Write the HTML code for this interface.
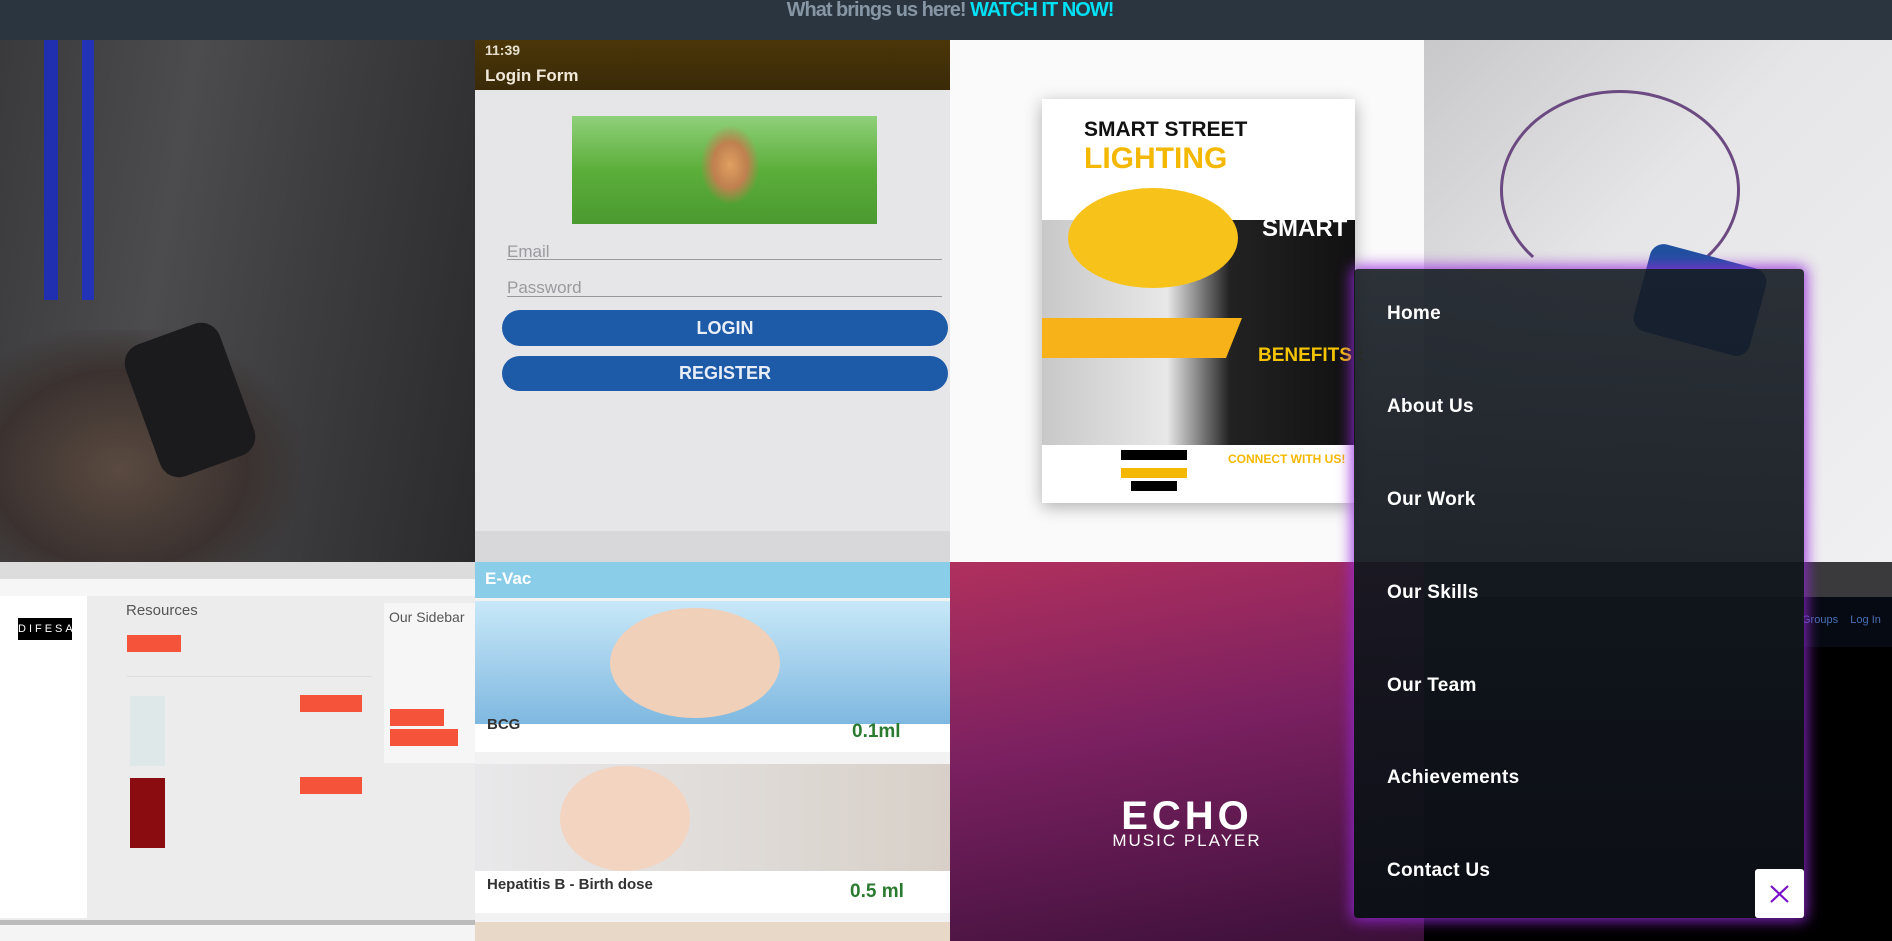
<!DOCTYPE html>
<html><head><meta charset="utf-8">
<style>
*{margin:0;padding:0;box-sizing:border-box}
body{width:1892px;height:941px;overflow:hidden;background:#2b343e;font-family:"Liberation Sans",sans-serif;position:relative}
.a{position:absolute}
.hdr{left:0;top:0;width:1892px;height:40px;background:#2b353f;text-align:center;font-weight:bold;font-size:20px;color:#8696a4;line-height:20px;letter-spacing:-1px;padding-left:8px}
.hdr b{color:#00e1f5}
.nav a{position:absolute;left:1387px;color:#fff;font-weight:bold;font-size:19px;text-decoration:none;letter-spacing:0.3px}
</style></head><body>
<div class="a hdr">What brings us here! <b>WATCH IT NOW!</b></div>

<!-- tile1 -->
<div class="a" style="left:0;top:40px;width:475px;height:522px;background:linear-gradient(100deg,#3a3a3c 0%,#4c4c4e 35%,#3e3e40 60%,#2a2a2c 100%)"></div>
<div class="a" style="left:44px;top:40px;width:14px;height:260px;background:#1f2fb0"></div>
<div class="a" style="left:82px;top:40px;width:12px;height:260px;background:#2233b8"></div>
<div class="a" style="left:0;top:330px;width:300px;height:232px;background:radial-gradient(ellipse at 40% 60%,#5a4a40 0%,#3b3230 50%,rgba(40,40,42,0) 75%)"></div>
<div class="a" style="left:140px;top:330px;width:100px;height:140px;border-radius:20px;background:#1b1b1d;transform:rotate(-20deg)"></div>

<!-- tile2 -->
<div class="a" style="left:475px;top:40px;width:475px;height:522px;background:#e6e6e8"></div>
<div class="a" style="left:475px;top:40px;width:475px;height:50px;background:linear-gradient(#4a3608,#3a2a08)"></div>
<div class="a" style="left:485px;top:42px;color:#e8e0d0;font-size:14px;font-weight:bold">11:39</div>
<div class="a" style="left:485px;top:66px;color:#f0e8d8;font-size:17px;font-weight:bold">Login Form</div>
<div class="a" style="left:572px;top:116px;width:305px;height:108px;background:linear-gradient(#8fd07a,#5cae3a 50%,#4a9a30)"></div>
<div class="a" style="left:700px;top:125px;width:60px;height:80px;background:radial-gradient(ellipse,#e0a060,#c08050 40%,rgba(0,0,0,0) 70%)"></div>
<div class="a" style="left:507px;top:242px;color:#9a9aa0;font-size:17px">Email</div>
<div class="a" style="left:507px;top:259px;width:435px;height:1px;background:#999"></div>
<div class="a" style="left:507px;top:278px;color:#9a9aa0;font-size:17px">Password</div>
<div class="a" style="left:507px;top:296px;width:435px;height:1px;background:#999"></div>
<div class="a" style="left:502px;top:310px;width:446px;height:36px;border-radius:18px;background:#1d5aa8;color:#e8eef8;text-align:center;line-height:36px;font-weight:bold;font-size:18px">LOGIN</div>
<div class="a" style="left:502px;top:356px;width:446px;height:35px;border-radius:18px;background:#1d5aa8;color:#e8eef8;text-align:center;line-height:35px;font-weight:bold;font-size:18px">REGISTER</div>
<div class="a" style="left:475px;top:531px;width:475px;height:31px;background:#d8d8da"></div>

<!-- tile3 -->
<div class="a" style="left:950px;top:40px;width:474px;height:522px;background:#fafafa"></div>
<div class="a" style="left:1042px;top:99px;width:313px;height:404px;background:#fff;box-shadow:0 4px 16px rgba(0,0,0,.3)"></div>
<div class="a" style="left:1084px;top:118px;color:#111;font-size:21px;font-weight:bold">SMART STREET</div>
<div class="a" style="left:1084px;top:142px;color:#f5b800;font-size:30px;font-weight:bold">LIGHTING</div>
<div class="a" style="left:1042px;top:220px;width:313px;height:225px;background:linear-gradient(90deg,#c8c8c8 0%,#e8e8e8 40%,#222 60%,#111 100%)"></div>
<div class="a" style="left:1068px;top:188px;width:170px;height:100px;border-radius:50%;background:#f7c21a"></div>
<div class="a" style="left:1042px;top:318px;width:200px;height:40px;background:#f7b21a;clip-path:polygon(0 0,100% 0,92% 100%,0 100%)"></div>
<div class="a" style="left:1262px;top:215px;color:#fff;font-size:24px;font-weight:bold">SMART</div>
<div class="a" style="left:1258px;top:345px;color:#f5c400;font-size:19px;font-weight:bold">BENEFITS :</div>
<div class="a" style="left:1042px;top:445px;width:313px;height:58px;background:#fff"></div>
<div class="a" style="left:1121px;top:450px;width:66px;height:10px;background:#000"></div>
<div class="a" style="left:1121px;top:468px;width:66px;height:10px;background:#f5b800"></div>
<div class="a" style="left:1131px;top:481px;width:46px;height:10px;background:#000"></div>
<div class="a" style="left:1228px;top:452px;color:#f5b800;font-size:12px;font-weight:bold">CONNECT WITH US!</div>

<!-- tile4 -->
<div class="a" style="left:1424px;top:40px;width:468px;height:522px;background:linear-gradient(135deg,#c8c8ca,#e6e6e8 40%,#f0f0f2)"></div>
<div class="a" style="left:1500px;top:90px;width:240px;height:200px;border:3px solid #6a4a80;border-radius:50%;border-bottom-color:transparent"></div>
<div class="a" style="left:1640px;top:255px;width:120px;height:90px;background:#2050a0;border-radius:14px;transform:rotate(15deg)"></div>

<!-- tile5 -->
<div class="a" style="left:0;top:562px;width:475px;height:379px;background:#ececec"></div>
<div class="a" style="left:0;top:562px;width:475px;height:17px;background:#dcdcdc"></div>
<div class="a" style="left:0;top:579px;width:475px;height:17px;background:#f6f6f6"></div>
<div class="a" style="left:0;top:596px;width:87px;height:322px;background:#fff"></div>
<div class="a" style="left:18px;top:618px;width:54px;height:22px;background:#000;color:#fff;font-size:11px;text-align:center;line-height:22px;letter-spacing:3px">DIFESA</div>
<div class="a" style="left:126px;top:602px;color:#555;font-size:15px">Resources</div>
<div class="a" style="left:127px;top:635px;width:54px;height:17px;background:#f5533a"></div>
<div class="a" style="left:127px;top:676px;width:245px;height:1px;background:#ddd"></div>
<div class="a" style="left:130px;top:696px;width:35px;height:70px;background:#dfe8e8"></div>
<div class="a" style="left:130px;top:778px;width:35px;height:70px;background:#8a0c10"></div>
<div class="a" style="left:300px;top:695px;width:62px;height:17px;background:#f5533a"></div>
<div class="a" style="left:300px;top:777px;width:62px;height:17px;background:#f5533a"></div>
<div class="a" style="left:384px;top:603px;width:91px;height:160px;background:#f6f6f6"></div>
<div class="a" style="left:389px;top:609px;color:#555;font-size:14px">Our Sidebar</div>
<div class="a" style="left:390px;top:709px;width:54px;height:17px;background:#f5533a"></div>
<div class="a" style="left:390px;top:729px;width:68px;height:17px;background:#f5533a"></div>
<div class="a" style="left:0;top:920px;width:475px;height:21px;background:#f4f4f4;border-top:5px solid #bbb"></div>

<!-- tile6 -->
<div class="a" style="left:475px;top:562px;width:475px;height:379px;background:#f2f2f2"></div>
<div class="a" style="left:475px;top:562px;width:475px;height:36px;background:#8acde8;color:#fff;font-size:17px;font-weight:bold;padding:7px 10px">E-Vac</div>
<div class="a" style="left:475px;top:601px;width:475px;height:123px;background:linear-gradient(#c8e8f8,#7fb8e0)"></div>
<div class="a" style="left:610px;top:608px;width:170px;height:110px;border-radius:50%;background:#f0d0b8"></div>
<div class="a" style="left:475px;top:724px;width:475px;height:28px;background:#fff"></div>
<div class="a" style="left:487px;top:716px;color:#333;font-size:15px;font-weight:bold">BCG</div>
<div class="a" style="left:852px;top:721px;color:#2a7a30;font-size:19px;font-weight:bold">0.1ml</div>
<div class="a" style="left:475px;top:764px;width:475px;height:107px;background:linear-gradient(90deg,#e8e8ea,#d8d0c8)"></div>
<div class="a" style="left:560px;top:766px;width:130px;height:105px;border-radius:50%;background:#f2d4c0"></div>
<div class="a" style="left:475px;top:871px;width:475px;height:42px;background:#fff"></div>
<div class="a" style="left:487px;top:876px;color:#333;font-size:15px;font-weight:bold">Hepatitis B - Birth dose</div>
<div class="a" style="left:850px;top:881px;color:#2a7a30;font-size:19px;font-weight:bold">0.5 ml</div>
<div class="a" style="left:475px;top:922px;width:475px;height:19px;background:#e8d8c8"></div>

<!-- tile7 -->
<div class="a" style="left:950px;top:562px;width:474px;height:379px;background:linear-gradient(170deg,#b0305e 0%,#7a2060 45%,#3a1038 100%)"></div>
<div class="a" style="left:950px;top:796px;width:474px;text-align:center;color:#fff;font-size:40px;font-weight:bold;letter-spacing:4px;line-height:40px">ECHO</div>
<div class="a" style="left:950px;top:832px;width:474px;text-align:center;color:#fff;font-size:17px;letter-spacing:2px;line-height:18px">MUSIC PLAYER</div>

<!-- tile8 -->
<div class="a" style="left:1424px;top:562px;width:468px;height:379px;background:#000"></div>
<div class="a" style="left:1424px;top:562px;width:468px;height:35px;background:#3a3a3c"></div>
<div class="a" style="left:1424px;top:597px;width:468px;height:50px;background:#060a12"></div>
<div class="a" style="left:1802px;top:614px;color:#4a6fb8;font-size:11px;white-space:nowrap">Groups &nbsp;&nbsp; Log In &nbsp;&nbsp; Sign up</div>

<!-- nav panel -->
<div class="a" style="left:1354px;top:269px;width:450px;height:649px;border-radius:4px;background:linear-gradient(rgba(22,28,36,.9),rgba(12,16,22,.97));box-shadow:0 0 14px 3px rgba(150,40,220,.85)"></div>
<div class="nav">
<a style="top:303px">Home</a>
<a style="top:396px">About Us</a>
<a style="top:489px">Our Work</a>
<a style="top:582px">Our Skills</a>
<a style="top:675px">Our Team</a>
<a style="top:767px">Achievements</a>
<a style="top:860px">Contact Us</a>
</div>
<div class="a" style="left:1755px;top:869px;width:49px;height:49px;background:#fff;border-radius:3px">
<svg width="49" height="49" viewBox="0 0 49 49"><path d="M16 17L33 33M33 17L16 33" stroke="#7a10c8" stroke-width="2.2" fill="none"/></svg>
</div>
</body></html>
